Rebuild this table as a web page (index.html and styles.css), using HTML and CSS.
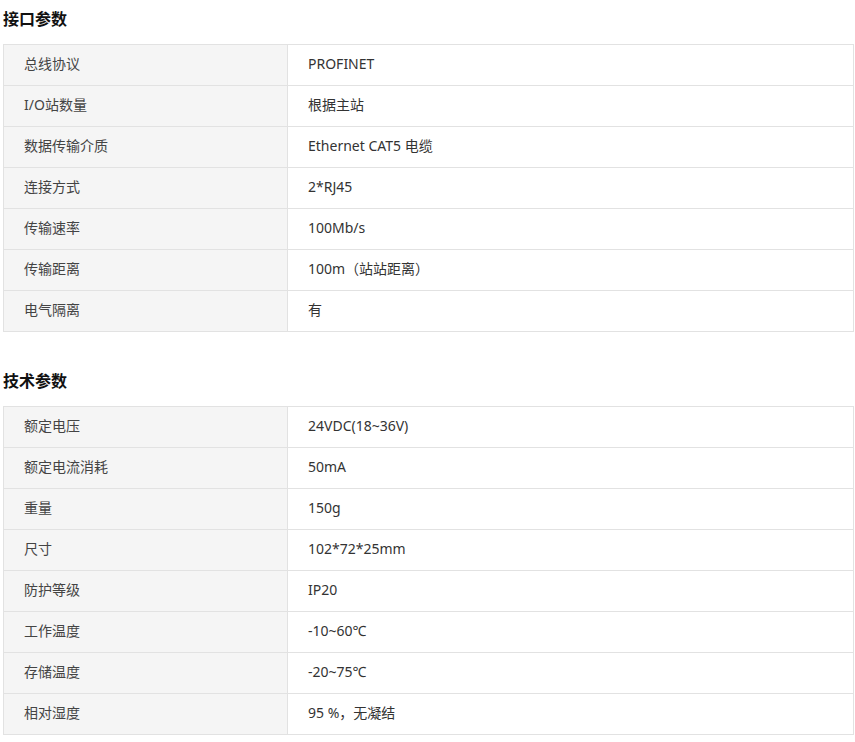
FILE: index.html
```html
<!DOCTYPE html>
<html lang="zh">
<head>
<meta charset="utf-8">
<link rel="stylesheet" href="styles.css">
</head>
<body>
<div class="page">
  <h2 class="title">接口参数</h2>
  <table class="spec">
    <tr><td class="k">总线协议</td><td class="v">PROFINET</td></tr>
    <tr><td class="k">I/O站数量</td><td class="v">根据主站</td></tr>
    <tr><td class="k">数据传输介质</td><td class="v">Ethernet CAT5 电缆</td></tr>
    <tr><td class="k">连接方式</td><td class="v">2*RJ45</td></tr>
    <tr><td class="k">传输速率</td><td class="v">100Mb/s</td></tr>
    <tr><td class="k">传输距离</td><td class="v">100m（站站距离）</td></tr>
    <tr><td class="k">电气隔离</td><td class="v">有</td></tr>
  </table>
  <h2 class="title second">技术参数</h2>
  <table class="spec">
    <tr><td class="k">额定电压</td><td class="v">24VDC(18~36V)</td></tr>
    <tr><td class="k">额定电流消耗</td><td class="v">50mA</td></tr>
    <tr><td class="k">重量</td><td class="v">150g</td></tr>
    <tr><td class="k">尺寸</td><td class="v">102*72*25mm</td></tr>
    <tr><td class="k">防护等级</td><td class="v">IP20</td></tr>
    <tr><td class="k">工作温度</td><td class="v">-10~60℃</td></tr>
    <tr><td class="k">存储温度</td><td class="v">-20~75℃</td></tr>
    <tr><td class="k">相对湿度</td><td class="v">95 %，无凝结</td></tr>
  </table>
</div>
</body>
</html>
```
FILE: styles.css
```css
html, body {
  margin: 0;
  padding: 0;
  background: #ffffff;
}
.page {
  padding: 0 2px 0 3px;
  font-family: "Noto Sans", "Noto Sans CJK SC", sans-serif;
  color: #333333;
}
.title {
  margin: 0;
  padding-top: 6px;
  font-size: 16px;
  line-height: 24px;
  font-weight: bold;
  color: #111111;
  font-family: "Noto Sans CJK SC", sans-serif;
}
.title.second {
  margin-top: 37px;
  padding-top: 0;
  position: relative;
  top: -1px;
}
.spec {
  margin-top: 14px;
  width: 851px;
  border-collapse: collapse;
  font-size: 14px;
}
.title.second + .spec {
  margin-top: 13px;
}
.spec td {
  border: 1px solid #e2e2e2;
  height: 38px;
  padding: 0 0 2px 0;
  line-height: 20px;
  vertical-align: middle;
}
.spec .k {
  width: 263px;
  padding-left: 20px;
  background: #f5f5f5;
  color: #444444;
}
.spec .v {
  padding-left: 20px;
  color: #333333;
}
```
